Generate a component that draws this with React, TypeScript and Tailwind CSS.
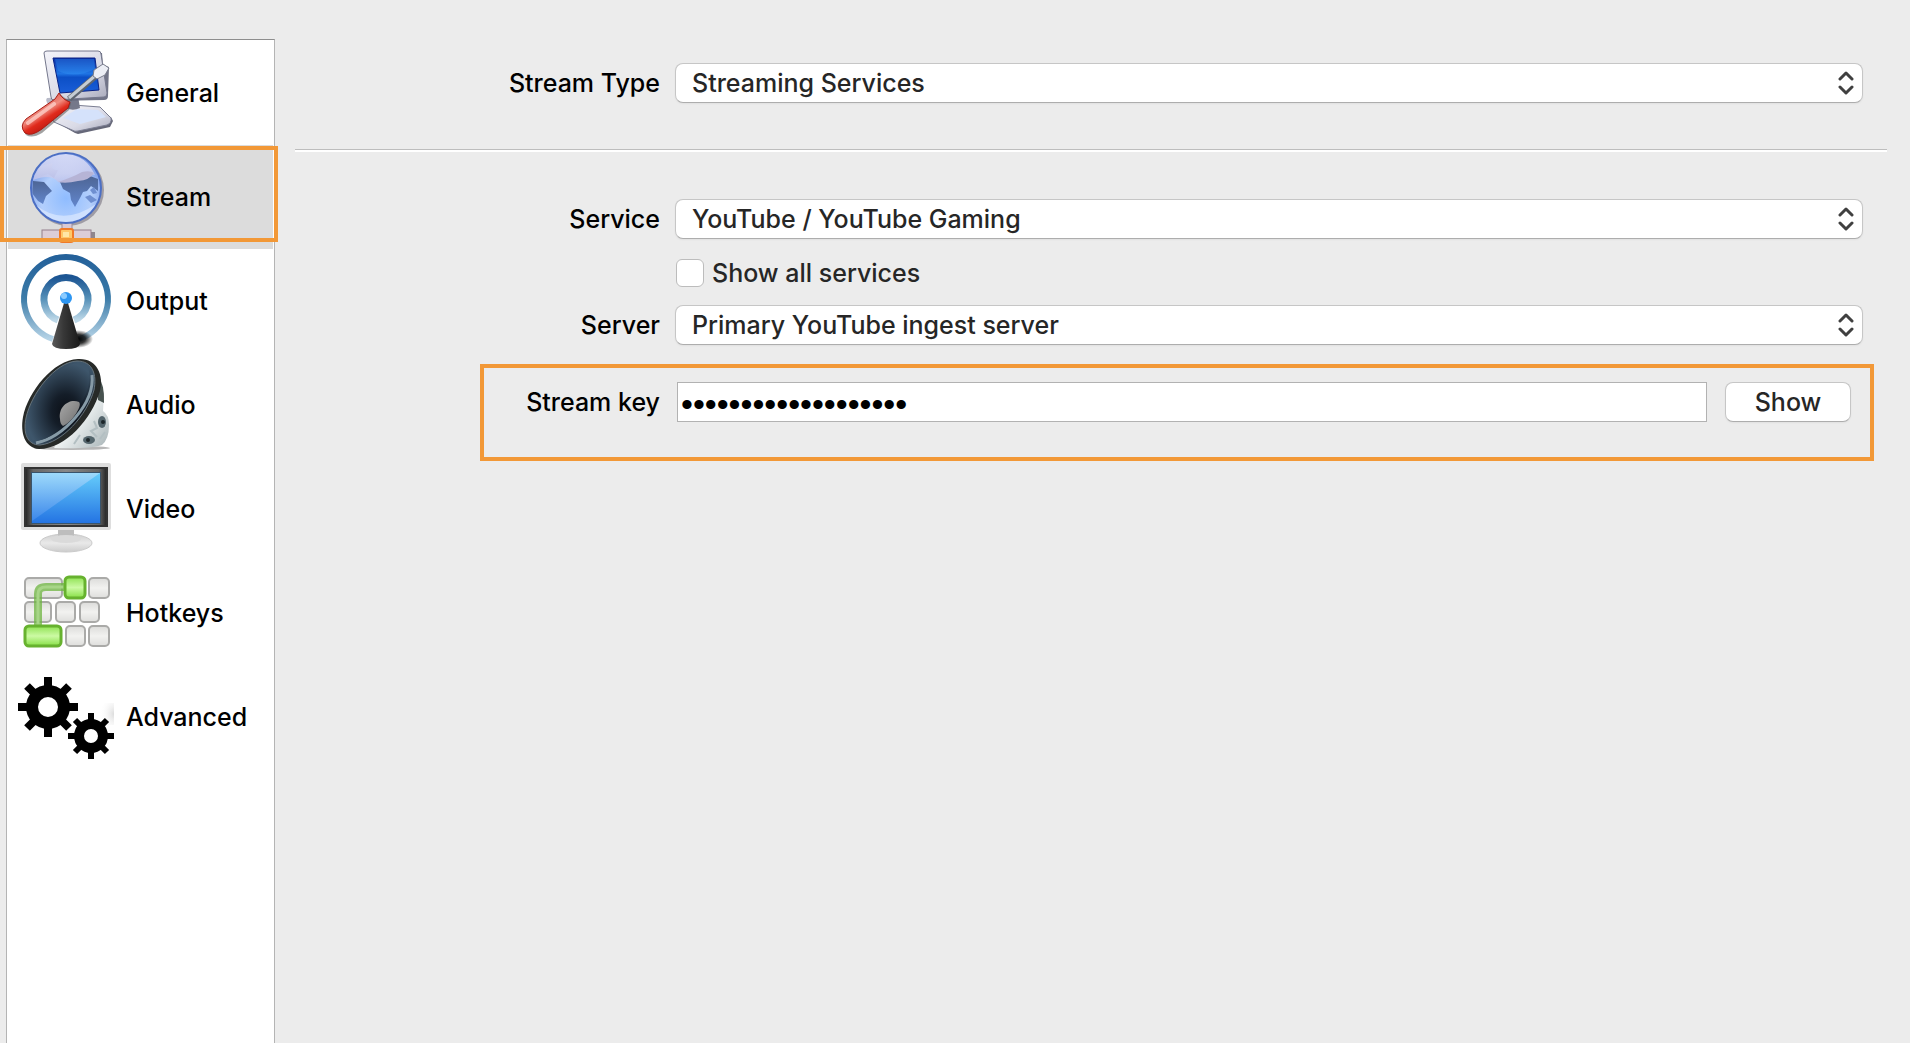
import { useState } from "react";
import type { ReactNode } from "react";

function GeneralIcon() {
  return (
    <svg viewBox="0 0 96 96" className="w-24 h-24 flex-none" aria-hidden="true">
      <defs>
        <linearGradient id="genFrame" x1="0" y1="0" x2="1" y2="1">
          <stop offset="0" stopColor="#f4f4fa" />
          <stop offset="0.6" stopColor="#d9dae6" />
          <stop offset="1" stopColor="#a9aabb" />
        </linearGradient>
        <linearGradient id="genScreen" x1="0" y1="0" x2="0" y2="1">
          <stop offset="0" stopColor="#0a2fa8" />
          <stop offset="0.45" stopColor="#1f74e4" />
          <stop offset="0.55" stopColor="#0c4fc6" />
          <stop offset="1" stopColor="#1a5ed8" />
        </linearGradient>
        <linearGradient id="genHandle" x1="0.2" y1="0.2" x2="0.7" y2="0.9">
          <stop offset="0" stopColor="#d8453a" />
          <stop offset="0.4" stopColor="#f08c80" />
          <stop offset="0.6" stopColor="#e02a1c" />
          <stop offset="1" stopColor="#a80f0a" />
        </linearGradient>
      </defs>
      <path d="M36 76L57 88L60 89L92 82L95 76L93 72L88 71L55 62Z" fill="#55586a" opacity="0.9" />
      <path d="M34 73L55 60L82 62L93 73Q94 78 89 80L60 86Q57 87 54 85L36 77Z" fill="url(#genFrame)" stroke="#7b7e92" />
      <path d="M45 73L59 64L80 65L88 72L62 79Z" fill="#d5e2fb" />
      <path d="M48 50L60 51L62 63Q54 67 46 62Z" fill="#75788a" />
      <path d="M29 53Q27 55 30 59L44 66L50 52Z" fill="#b9bbc9" />
      <path d="M28 8L84 8L85 20L91 22L90 51Q90 55 86 55L35 56Z" fill="#62657a" opacity="0.9" />
      <path d="M26 8Q26 6 29 6L80 6Q83 6 83 9L89 48Q89 52 86 52L36 55Q33 55 33 52Z" fill="url(#genFrame)" stroke="#74778c" />
      <path d="M35 13L77 13L81 45L42 48Z" fill="url(#genScreen)" stroke="#0b2385" />
      <path d="M37 14L76 14L77 24Q57 34 40 26Z" fill="#3797f5" opacity="0.35" />
      <path d="M51 54L79 30" stroke="#5d6570" strokeWidth="6" />
      <path d="M51 53L78 30" stroke="#c5ccd3" strokeWidth="3" />
      <path d="M76 25L85 19L91 23L87 30L79 34L75 31Z" fill="#eceef5" stroke="#777b8b" />
      <path d="M42 49L53 58L51 65L24 88Q14 94 8 90Q2 82 8 75L38 54Z" fill="#555" opacity="0.55" />
      <path d="M41 48Q45 55 52 57L50 63L24 84Q13 92 7 88Q1 81 8 74L37 54Z" fill="url(#genHandle)" stroke="#a81c14" />
      <path d="M10 78L36 59" stroke="#ffd5cf" strokeWidth="4" strokeLinecap="round" opacity="0.7" />
    </svg>
  );
}

function StreamIcon() {
  return (
    <svg viewBox="0 -1 96 96" className="w-24 h-24 flex-none" aria-hidden="true">
      <defs>
        <radialGradient id="globe" cx="0.5" cy="0.65" r="0.6">
          <stop offset="0" stopColor="#8fbcff" />
          <stop offset="0.6" stopColor="#b3cffc" />
          <stop offset="1" stopColor="#7b9be6" />
        </radialGradient>
        <linearGradient id="gloss" x1="0" y1="0" x2="0" y2="1">
          <stop offset="0" stopColor="#f2effc" />
          <stop offset="1" stopColor="#c3c3e8" />
        </linearGradient>
        <linearGradient id="land" x1="0" y1="0" x2="0" y2="1">
          <stop offset="0" stopColor="#4d6595" />
          <stop offset="1" stopColor="#6286cc" />
        </linearGradient>
        <clipPath id="globeClip">
          <circle cx="48" cy="38" r="34" />
        </clipPath>
      </defs>
      <circle cx="50" cy="40" r="36" fill="#77717f" opacity="0.6" />
      <rect x="44" y="72" width="10" height="10" fill="#d9c9d5" stroke="#9d8c9b" />
      <rect x="25" y="82" width="52" height="10" fill="#6d626b" opacity="0.7" />
      <rect x="24" y="80" width="49" height="9" fill="#dccdd7" stroke="#947f8c" />
      <rect x="42" y="79" width="13" height="13" rx="2" fill="#ffc869" stroke="#f07a29" strokeWidth="2" />
      <rect x="45" y="82" width="6" height="5" fill="#ffe7a6" />
      <circle cx="48" cy="38" r="35" fill="url(#globe)" stroke="#4c6fc4" strokeWidth="2" />
      <g clipPath="url(#globeClip)">
        <path d="M15 31L26 32L34 41L28 46L25 54L20 51L14 43Z" fill="url(#land)" />
        <path d="M42 32L57 29L72 26L80 29L80 41L73 36L69 41L65 42L62 48L57 57L53 50L52 43L45 39Z" fill="url(#land)" />
        <path d="M72 40L76 37L79 43L75 44ZM67 47L72 45L79 50L73 53Z" fill="#6f8fd0" />
        <path d="M23 16Q17 24 21 27L30 24L36 28L40 20Q31 20 35 13Z" fill="#98aee4" />
        <path d="M15 30Q12 4 48 4Q68 5 77 25Q67 21 58 27Q50 33 40 32Q33 23 15 30Z" fill="url(#gloss)" opacity="0.75" />
        <path d="M40 32Q55 27 64 22Q72 20 76 23Q72 30 60 31Q48 34 40 32Z" fill="#b6b4d6" />
        <path d="M18 55Q45 77 78 54Q66 74 47 73Q28 72 18 55Z" fill="#edf3ff" opacity="0.5" />
      </g>
    </svg>
  );
}

function OutputIcon() {
  return (
    <svg viewBox="0 0 96 96" className="w-24 h-24 flex-none" aria-hidden="true">
      <defs>
        <linearGradient id="ringOuter" x1="0" y1="0" x2="0" y2="1">
          <stop offset="0" stopColor="#24619a" />
          <stop offset="0.5" stopColor="#3b7ba8" />
          <stop offset="1" stopColor="#b5d3e6" />
        </linearGradient>
        <linearGradient id="ringInner" x1="0" y1="0" x2="0" y2="1">
          <stop offset="0" stopColor="#1c5593" />
          <stop offset="0.5" stopColor="#5590b8" />
          <stop offset="1" stopColor="#bdd8e8" />
        </linearGradient>
        <linearGradient id="mast" x1="0" y1="0" x2="1" y2="0">
          <stop offset="0" stopColor="#5a5a5a" />
          <stop offset="0.4" stopColor="#383838" />
          <stop offset="1" stopColor="#191919" />
        </linearGradient>
        <radialGradient id="mastShadow">
          <stop offset="0" stopColor="#000" />
          <stop offset="0.5" stopColor="#000" stopOpacity="0.8" />
          <stop offset="1" stopColor="#000" stopOpacity="0" />
        </radialGradient>
      </defs>
      <path d="M35 86A42 42 0 1 1 61 86" fill="none" stroke="url(#ringOuter)" strokeWidth="6" />
      <path d="M40 67A22 22 0 1 1 56 67" fill="none" stroke="url(#ringInner)" strokeWidth="7" />
      <ellipse cx="60" cy="86" rx="15" ry="9" fill="url(#mastShadow)" />
      <path d="M46 50L50 50L62 91Q61 96 48 96Q35 96 34 91Z" fill="url(#mast)" />
      <circle cx="48" cy="45" r="6" fill="#2d96f2" />
      <circle cx="46" cy="43" r="3" fill="#8bcbff" />
    </svg>
  );
}

function AudioIcon() {
  return (
    <svg viewBox="0 0 96 96" className="w-24 h-24 flex-none" aria-hidden="true">
      <defs>
        <radialGradient id="cone" cx="0.62" cy="0.62" r="0.62">
          <stop offset="0" stopColor="#0b0f16" />
          <stop offset="0.35" stopColor="#141d28" />
          <stop offset="1" stopColor="#3e566b" />
        </radialGradient>
        <linearGradient id="magnet" x1="0" y1="0" x2="1" y2="1">
          <stop offset="0" stopColor="#8f9b9e" />
          <stop offset="0.5" stopColor="#f0f4f4" />
          <stop offset="1" stopColor="#a6b2b5" />
        </linearGradient>
        <linearGradient id="dustCap" x1="0" y1="0" x2="1" y2="1">
          <stop offset="0" stopColor="#a8a8a8" />
          <stop offset="1" stopColor="#6f6f6f" />
        </linearGradient>
      </defs>
      <ellipse cx="54" cy="91" rx="38" ry="2" fill="#999" opacity="0.7" />
      <path d="M80 20L86 37L85 54Q91 58 91 68Q91 82 84 88Q72 92 36 91L50 70Z" fill="url(#magnet)" />
      <path d="M79 16Q87 28 86 46L80 43Z" fill="#47524f" />
      <ellipse cx="84" cy="65" rx="4" ry="6" fill="#54656c" />
      <ellipse cx="71" cy="83" rx="6" ry="4" fill="#54656c" />
      <circle cx="85" cy="65" r="2" fill="#1c2529" />
      <circle cx="70" cy="83" r="2" fill="#1c2529" />
      <path d="M76 64L79 71L73 74L79 80M62 78L56 87M87 75L82 82" stroke="#b3bfc2" strokeWidth="2" fill="none" />
      <path d="M60 2C79 1 86 18 82 34C74 61 48 92 21 92C7 91 2 76 5 60C10 35 35 3 60 2Z" fill="#272a28" />
      <path d="M59 4C75 4 79 18 76 33C69 58 44 86 22 88C9 88 5 76 8 61C13 37 37 5 59 4Z" fill="url(#cone)" stroke="#66737b" />
      <path d="M74 18C77 46 46 80 18 86" fill="none" stroke="#879ba7" strokeWidth="3" />
      <path d="M70 10C75 25 68 46 46 68C34 80 20 87 13 82C4 75 9 51 24 31C40 10 60 0 70 10Z" fill="url(#cone)" />
      <path d="M42 62C40 50 51 41 61 45C65 49 53 66 45 69Q42 67 42 62Z" fill="url(#dustCap)" />
    </svg>
  );
}

function VideoIcon() {
  return (
    <svg viewBox="0 0 96 96" className="w-24 h-24 flex-none" aria-hidden="true">
      <defs>
        <linearGradient id="vidScreen" x1="0" y1="0" x2="0" y2="1">
          <stop offset="0" stopColor="#66cdfb" />
          <stop offset="1" stopColor="#2474e3" />
        </linearGradient>
        <linearGradient id="vidShine" x1="0" y1="0" x2="0" y2="1">
          <stop offset="0" stopColor="#a7dcfb" />
          <stop offset="1" stopColor="#3f8aec" />
        </linearGradient>
        <linearGradient id="vidFrame" x1="0" y1="0" x2="1" y2="0">
          <stop offset="0" stopColor="#222" />
          <stop offset="0.1" stopColor="#666" />
          <stop offset="0.5" stopColor="#888" />
          <stop offset="0.9" stopColor="#666" />
          <stop offset="1" stopColor="#222" />
        </linearGradient>
        <linearGradient id="vidStand" x1="0" y1="0" x2="0" y2="1">
          <stop offset="0" stopColor="#cfcfcf" />
          <stop offset="0.5" stopColor="#e9e9e9" />
          <stop offset="1" stopColor="#cccccc" />
        </linearGradient>
      </defs>
      <ellipse cx="48" cy="82" rx="26" ry="9" fill="url(#vidStand)" stroke="#cacaca" />
      <rect x="40" y="67" width="16" height="9" fill="#bdbdbd" />
      <ellipse cx="48" cy="78" rx="15" ry="4" fill="#dadada" />
      <rect x="3" y="2" width="90" height="67" rx="2" fill="#dedede" />
      <rect x="7" y="7" width="82" height="58" fill="url(#vidFrame)" stroke="#333" strokeWidth="2" />
      <rect x="13" y="11" width="70" height="52" fill="#39546c" />
      <rect x="14" y="12" width="68" height="50" fill="url(#vidScreen)" />
      <path d="M14 12L82 12L14 60Z" fill="url(#vidShine)" opacity="0.85" />
    </svg>
  );
}

const greyKeys = [
  { x: 7, y: 13, w: 37 },
  { x: 71, y: 13, w: 20 },
  { x: 7, y: 37, w: 26 },
  { x: 38, y: 37, w: 19 },
  { x: 62, y: 37, w: 19 },
  { x: 48, y: 61, w: 19 },
  { x: 71, y: 61, w: 20 },
];

function HotkeysIcon() {
  return (
    <svg viewBox="0 0 96 96" className="w-24 h-24 flex-none" aria-hidden="true">
      <defs>
        <linearGradient id="keyGrey" x1="0" y1="0" x2="0" y2="1">
          <stop offset="0" stopColor="#dcdcda" />
          <stop offset="0.5" stopColor="#f2f2f0" />
          <stop offset="1" stopColor="#dededc" />
        </linearGradient>
        <linearGradient id="keyGreen" x1="0" y1="0" x2="0" y2="1">
          <stop offset="0" stopColor="#8fe253" />
          <stop offset="0.5" stopColor="#ccfaa4" />
          <stop offset="1" stopColor="#86df45" />
        </linearGradient>
      </defs>
      {greyKeys.map((k) => (
        <rect
          key={`${k.x}-${k.y}`}
          x={k.x}
          y={k.y}
          width={k.w}
          height="20"
          rx="4"
          fill="url(#keyGrey)"
          stroke="#aaaaa8"
          strokeWidth="2"
        />
      ))}
      <path d="M20 60V29Q20 22 28 22H46" fill="none" stroke="#6eb440" strokeWidth="8" opacity="0.75" />
      <path d="M20 60V29Q20 22 28 22H46" fill="none" stroke="#a7d587" strokeWidth="3" />
      <rect x="47" y="12" width="20" height="21" rx="4" fill="url(#keyGreen)" stroke="#67b22f" strokeWidth="3" />
      <rect x="7" y="61" width="36" height="20" rx="4" fill="url(#keyGreen)" stroke="#67b22f" strokeWidth="3" />
    </svg>
  );
}

function AdvancedIcon() {
  return (
    <svg viewBox="0 0 96 96" className="w-24 h-24 flex-none" aria-hidden="true">
      <defs>
        <radialGradient id="smudge" cx="1" cy="0.5" r="0.9">
          <stop offset="0" stopColor="#dcdcdc" />
          <stop offset="1" stopColor="#fff" stopOpacity="0" />
        </radialGradient>
      </defs>
      <rect x="80" y="34" width="16" height="22" fill="url(#smudge)" />
      <g stroke="#000" fill="none">
        <circle cx="30" cy="38" r="16" strokeWidth="12" />
        <path d="M30 8V20M30 56V68M0 38H12M48 38H60" strokeWidth="8" />
        <path d="M9 17L16 24M51 17L44 24M9 59L16 52M51 59L44 52" strokeWidth="8" />
        <circle cx="73" cy="67" r="12" strokeWidth="10" />
        <path d="M73 44V54M73 80V90M50 67H60M86 67H96" strokeWidth="6" />
        <path d="M57 51L63 57M89 51L83 57M57 83L63 77M89 83L83 77" strokeWidth="6" />
      </g>
    </svg>
  );
}

const tabs = [
  { id: "general", name: "General", icon: <GeneralIcon /> },
  { id: "stream", name: "Stream", icon: <StreamIcon /> },
  { id: "output", name: "Output", icon: <OutputIcon /> },
  { id: "audio", name: "Audio", icon: <AudioIcon /> },
  { id: "video", name: "Video", icon: <VideoIcon /> },
  { id: "hotkeys", name: "Hotkeys", icon: <HotkeysIcon /> },
  { id: "advanced", name: "Advanced", icon: <AdvancedIcon /> },
];

interface FieldProps {
  id: string;
  label: string;
  children: ReactNode;
}

function Field({ id, label, children }: FieldProps) {
  return (
    <div className="flex items-center gap-[15px] pr-[47px]">
      <label htmlFor={id} className="w-[385px] flex-none text-right">
        {label}
      </label>
      {children}
    </div>
  );
}

function Dropdown({ id, options }: { id: string; options: string[] }) {
  return (
    <div className="relative flex-1">
      <select
        id={id}
        className="block w-full h-10 appearance-none rounded-lg border border-[#c6c6c6] border-b-[#adadad] bg-white pl-4 pr-12 leading-8 text-[#262626] shadow-xs"
      >
        {options.map((option) => (
          <option key={option}>{option}</option>
        ))}
      </select>
      <svg
        viewBox="0 0 16 26"
        className="pointer-events-none absolute right-[9px] top-[7px] w-4 h-[26px]"
        fill="none"
        stroke="#404040"
        strokeWidth="3"
        strokeLinecap="round"
        strokeLinejoin="round"
        aria-hidden="true"
      >
        <path d="M2 9L8 3L14 9M2 17L8 23L14 17" />
      </svg>
    </div>
  );
}

export default function App() {
  const [selectedTab, setSelectedTab] = useState("stream");
  const [streamKey, setStreamKey] = useState("abcd-efgh-ijkl-mnop");
  const [visible, setVisible] = useState(false);

  return (
    <div className="flex min-h-screen bg-[#ececec] font-['Inter','Liberation_Sans',sans-serif] text-[25px] leading-8 font-medium text-black">
      <nav className="ml-1.5 mt-[39px] w-[269px] flex-none border border-b-0 border-[#b4b4b4] border-t-[#8e8e8e] bg-white p-px">
        {tabs.map((tab) => (
          <button
            key={tab.id}
            type="button"
            onClick={() => setSelectedTab(tab.id)}
            className={`relative flex w-full h-[104px] items-center gap-3 pl-2.5 text-left ${
              selectedTab === tab.id ? "bg-[#dcdcdc]" : ""
            }`}
          >
            {tab.icon}
            <span>{tab.name}</span>
            {selectedTab === tab.id && (
              <span className="absolute -left-2 -right-[5px] top-px h-24 border-4 border-[#f29837]" />
            )}
          </button>
        ))}
      </nav>

      <main className="flex-1 pt-[63px]">
        <Field id="stream-type" label="Stream Type">
          <Dropdown
            id="stream-type"
            options={["Streaming Services", "Custom Streaming Server"]}
          />
        </Field>

        <hr className="mt-[46px] mb-[47px] ml-5 mr-[23px] h-[3px] border-0 border-t border-[#bdbdbd] bg-white" />

        <Field id="service" label="Service">
          <Dropdown id="service" options={["YouTube / YouTube Gaming", "Twitch"]} />
        </Field>

        <div className="mt-5 mb-[18px] ml-[401px] flex h-7 items-center gap-2">
          <input
            id="show-all"
            type="checkbox"
            className="w-7 h-7 flex-none appearance-none rounded-md border border-[#bcbcbc] bg-white checked:bg-[#3b82f6]"
          />
          <label htmlFor="show-all" className="text-[#262626]">
            Show all services
          </label>
        </div>

        <Field id="server" label="Server">
          <Dropdown
            id="server"
            options={["Primary YouTube ingest server", "Backup YouTube ingest server"]}
          />
        </Field>

        <div className="mt-[19px] ml-[205px] mr-9 flex h-[97px] items-start border-4 border-[#f29837] pt-3.5 pr-[19px]">
          <label htmlFor="stream-key" className="w-[176px] flex-none pt-1 text-right">
            Stream key
          </label>
          <input
            id="stream-key"
            type={visible ? "text" : "password"}
            value={streamKey}
            onChange={(e) => setStreamKey(e.target.value)}
            className={`ml-[17px] h-10 min-w-0 flex-1 border border-[#b2b2b2] bg-white ${
              visible
                ? "px-1"
                : "px-[3px] pt-1 font-['Liberation_Sans',sans-serif] text-[34px] font-normal"
            }`}
          />
          <button
            type="button"
            onClick={() => setVisible(!visible)}
            className="ml-[18px] h-10 w-[126px] flex-none rounded-lg border border-[#c6c6c6] border-b-[#adadad] bg-white text-[#262626] shadow-xs"
          >
            {visible ? "Hide" : "Show"}
          </button>
        </div>
      </main>
    </div>
  );
}
